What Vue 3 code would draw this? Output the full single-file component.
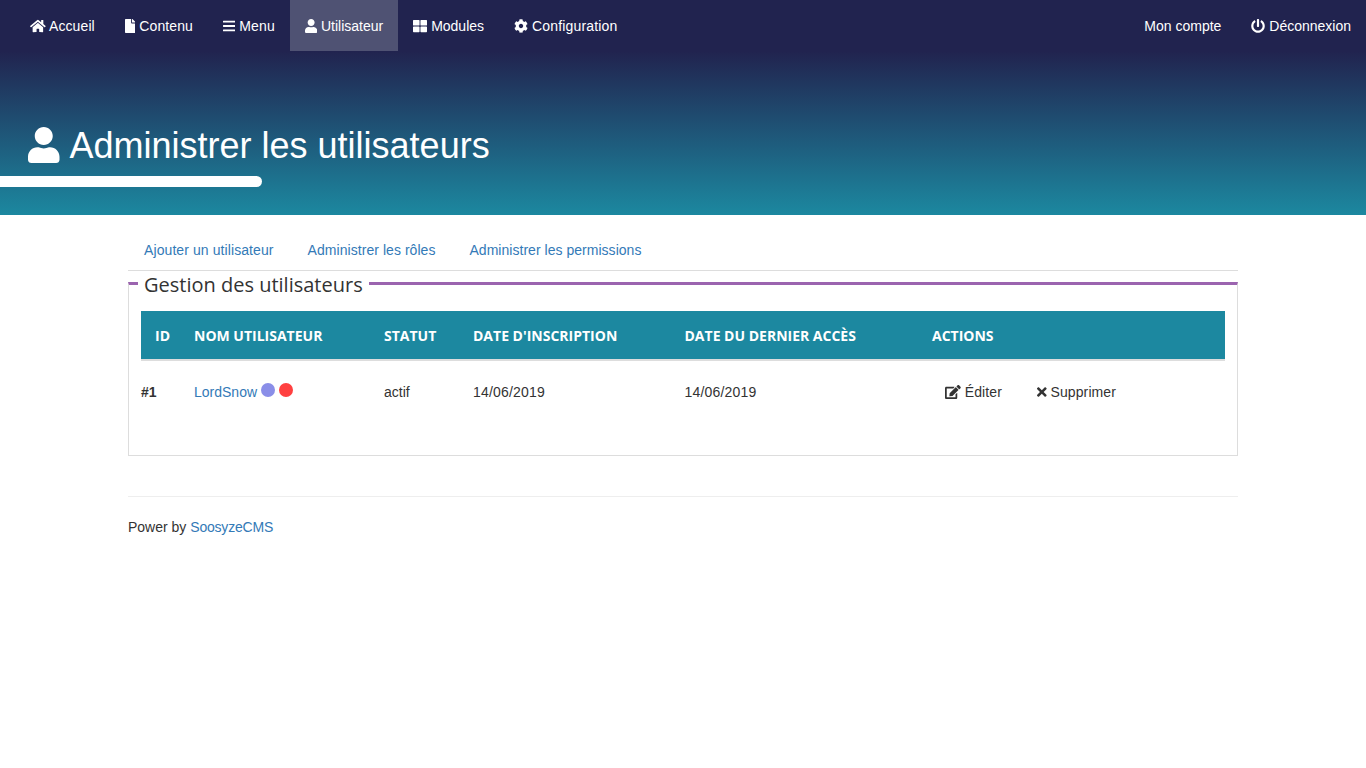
<template>
  <div class="page">
    <header class="top">
      <nav class="nav">
        <ul class="nav-list">
          <li v-for="item in mainMenu" :key="item.label" :class="{ active: item.active }">
            <a href="#" :style="{ letterSpacing: item.ls + 'px' }">
              <svg class="icon" :viewBox="icons[item.icon].box"><path :d="icons[item.icon].d" /></svg>
              {{ item.label }}
            </a>
          </li>
        </ul>
        <ul class="nav-list">
          <li><a href="#">Mon compte</a></li>
          <li>
            <a href="#">
              <svg class="icon" :viewBox="icons.power.box"><path :d="icons.power.d" /></svg>
              Déconnexion
            </a>
          </li>
        </ul>
      </nav>
      <div class="banner">
        <h1>
          <svg class="icon" :viewBox="icons.user.box"><path :d="icons.user.d" /></svg>
          Administrer les utilisateurs
        </h1>
        <div class="bar"></div>
      </div>
    </header>

    <main class="container">
      <ul class="tabs">
        <li v-for="tab in tabs" :key="tab.label">
          <a href="#" :style="{ letterSpacing: tab.ls + 'px' }">{{ tab.label }}</a>
        </li>
      </ul>

      <fieldset class="box">
        <legend>Gestion des utilisateurs</legend>
        <table>
          <colgroup>
            <col v-for="w in colWidths" :key="w" :style="{ width: w + 'px' }" />
          </colgroup>
          <thead>
            <tr>
              <th>Id</th>
              <th>Nom utilisateur</th>
              <th>Statut</th>
              <th>Date d'inscription</th>
              <th>Date du dernier accès</th>
              <th>Actions</th>
            </tr>
          </thead>
          <tbody>
            <tr>
              <td class="num">#1</td>
              <td>
                <a href="#">LordSnow</a>
                <i class="dot blue"></i>
                <i class="dot red"></i>
              </td>
              <td>actif</td>
              <td class="date">14/06/2019</td>
              <td class="date">14/06/2019</td>
              <td class="actions">
                <a href="#" class="act edit">
                  <svg class="icon" :viewBox="icons.edit.box"><path :d="icons.edit.d" /></svg>
                  Éditer
                </a>
                <a href="#" class="act">
                  <svg class="icon" :viewBox="icons.times.box"><path :d="icons.times.d" /></svg>
                  Supprimer
                </a>
              </td>
            </tr>
          </tbody>
        </table>
      </fieldset>

      <footer class="foot">
        <p>Power by <a href="#">SoosyzeCMS</a></p>
      </footer>
    </main>
  </div>
</template>

<script setup>
// ls = small letter spacing, keeps each label as wide as in the design
const mainMenu = [
  { label: "Accueil", icon: "home", ls: 0.1 },
  { label: "Contenu", icon: "file", ls: 0.1 },
  { label: "Menu", icon: "bars", ls: 0.15 },
  { label: "Utilisateur", icon: "user", ls: 0 },
  { label: "Modules", icon: "grid", ls: 0 },
  { label: "Configuration", icon: "cog", ls: 0.15 }
];
mainMenu[3].active = true;

const tabs = [
  { label: "Ajouter un utilisateur", ls: 0.09 },
  { label: "Administrer les rôles", ls: 0.05 },
  { label: "Administrer les permissions", ls: 0.03 }
];

const colWidths = [39, 190, 89, 211.5, 247.5, 307];

const icons = {
  home: {
    box: "0 0 576 512",
    d: "M280.37 148.26L96 300.11V464a16 16 0 0 0 16 16l112.06-.29a16 16 0 0 0 15.92-16V368a16 16 0 0 1 16-16h64a16 16 0 0 1 16 16v95.64a16 16 0 0 0 16 16.05L464 480a16 16 0 0 0 16-16V300L295.67 148.26a12.19 12.19 0 0 0-15.3 0zM571.6 251.47L488 182.56V44.05a12 12 0 0 0-12-12h-56a12 12 0 0 0-12 12v72.61L318.47 43a48 48 0 0 0-61 0L4.34 251.47a12 12 0 0 0-1.6 16.9l25.5 31A12 12 0 0 0 45.15 301l235.22-193.74a12.19 12.19 0 0 1 15.3 0L530.9 301a12 12 0 0 0 16.9-1.6l25.5-31a12 12 0 0 0-1.7-16.93z"
  },
  file: {
    box: "0 0 384 512",
    d: "M224 136V0H24C10.7 0 0 10.7 0 24v464c0 13.3 10.7 24 24 24h336c13.3 0 24-10.7 24-24V160H248c-13.2 0-24-10.8-24-24zm160-14.1v6.1H256V0h6.1c6.4 0 12.5 2.5 17 7l97.9 98c4.5 4.5 7 10.6 7 16.9z"
  },
  bars: {
    box: "0 0 448 512",
    d: "M16 132h416c8.837 0 16-7.163 16-16V76c0-8.837-7.163-16-16-16H16C7.163 60 0 67.163 0 76v40c0 8.837 7.163 16 16 16zm0 160h416c8.837 0 16-7.163 16-16v-40c0-8.837-7.163-16-16-16H16c-8.837 0-16 7.163-16 16v40c0 8.837 7.163 16 16 16zm0 160h416c8.837 0 16-7.163 16-16v-40c0-8.837-7.163-16-16-16H16c-8.837 0-16 7.163-16 16v40c0 8.837 7.163 16 16 16z"
  },
  user: {
    box: "0 0 448 512",
    d: "M224 256c70.7 0 128-57.3 128-128S294.7 0 224 0 96 57.3 96 128s57.3 128 128 128zm89.6 32h-16.7c-22.2 10.2-46.9 16-72.9 16s-50.6-5.8-72.9-16h-16.7C60.2 288 0 348.2 0 422.4V464c0 26.5 21.5 48 48 48h352c26.5 0 48-21.5 48-48v-41.6c0-74.2-60.2-134.4-134.4-134.4z"
  },
  grid: {
    box: "0 0 512 512",
    d: "M296 32h192c13.255 0 24 10.745 24 24v160c0 13.255-10.745 24-24 24H296c-13.255 0-24-10.745-24-24V56c0-13.255 10.745-24 24-24zm-80 0H24C10.745 32 0 42.745 0 56v160c0 13.255 10.745 24 24 24h192c13.255 0 24-10.745 24-24V56c0-13.255-10.745-24-24-24zM0 296v160c0 13.255 10.745 24 24 24h192c13.255 0 24-10.745 24-24V296c0-13.255-10.745-24-24-24H24c-13.255 0-24 10.745-24 24zm296 184h192c13.255 0 24-10.745 24-24V296c0-13.255-10.745-24-24-24H296c-13.255 0-24 10.745-24 24v160c0 13.255 10.745 24 24 24z"
  },
  cog: {
    box: "0 0 512 512",
    d: "M487.4 315.7l-42.6-24.6c4.3-23.2 4.3-47 0-70.2l42.6-24.6c4.9-2.8 7.1-8.6 5.5-14-11.1-35.6-30-67.8-54.7-94.6-3.8-4.1-10-5.1-14.8-2.3L380.8 110c-17.9-15.4-38.5-27.3-60.8-35.1V25.8c0-5.6-3.9-10.5-9.4-11.7-36.7-8.2-74.3-7.8-109.2 0-5.5 1.2-9.4 6.1-9.4 11.7V75c-22.2 7.9-42.8 19.8-60.8 35.1L88.7 85.5c-4.9-2.8-11-1.9-14.8 2.3-24.7 26.7-43.6 58.9-54.7 94.6-1.7 5.4.6 11.2 5.5 14L67.3 221c-4.3 23.2-4.3 47 0 70.2l-42.6 24.6c-4.9 2.8-7.1 8.6-5.5 14 11.1 35.6 30 67.8 54.7 94.6 3.8 4.1 10 5.1 14.8 2.3l42.6-24.6c17.9 15.4 38.5 27.3 60.8 35.1v49.2c0 5.6 3.9 10.5 9.4 11.7 36.7 8.2 74.3 7.8 109.2 0 5.5-1.2 9.4-6.1 9.4-11.7v-49.2c22.2-7.9 42.8-19.8 60.8-35.1l42.6 24.6c4.9 2.8 11 1.9 14.8-2.3 24.7-26.7 43.6-58.9 54.7-94.6 1.5-5.5-.7-11.3-5.6-14.1zM256 336c-44.1 0-80-35.9-80-80s35.9-80 80-80 80 35.9 80 80-35.9 80-80 80z"
  },
  power: {
    box: "0 0 512 512",
    d: "M400 54.1c63 45 104 118.6 104 201.9 0 136.8-110.8 247.7-247.5 248C120 504.3 8.2 393 8 256.4 7.9 173.1 48.9 99.3 111.8 54.2c11.7-8.3 28-4.8 35 7.7L162.6 90c5.9 10.5 3.1 23.8-6.6 31-41.5 30.8-68 79.6-68 134.9-.1 92.3 74.5 168.1 168 168.1 91.6 0 168.6-74.2 168-169.1-.3-51.8-24.7-101.8-68.1-134-9.7-7.2-12.4-20.5-6.5-30.9l15.8-28.1c7-12.4 23.2-16.1 34.8-7.8zM296 264V24c0-13.3-10.7-24-24-24h-32c-13.3 0-24 10.7-24 24v240c0 13.3 10.7 24 24 24h32c13.3 0 24-10.7 24-24z"
  },
  edit: {
    box: "0 0 576 512",
    d: "M402.6 83.2l90.2 90.2c3.8 3.8 3.8 10 0 13.8L274.4 405.6l-92.8 10.3c-12.4 1.4-22.9-9.1-21.5-21.5l10.3-92.8L388.8 83.2c3.8-3.8 10-3.8 13.8 0zm162-22.9l-48.8-48.8c-15.2-15.2-39.9-15.2-55.2 0l-35.4 35.4c-3.8 3.8-3.8 10 0 13.8l90.2 90.2c3.8 3.8 10 3.8 13.8 0l35.4-35.4c15.2-15.3 15.2-40 0-55.2zM384 346.2V448H64V128h229.8c3.2 0 6.2-1.3 8.5-3.5l40-40c7.6-7.6 2.2-20.5-8.5-20.5H48C21.5 64 0 85.5 0 112v352c0 26.5 21.5 48 48 48h352c26.5 0 48-21.5 48-48V306.2c0-10.7-12.9-16-20.5-8.5l-40 40c-2.2 2.3-3.5 5.3-3.5 8.5z"
  },
  times: {
    box: "0 0 352 512",
    d: "M242.72 256l100.07-100.07c12.28-12.28 12.28-32.19 0-44.48l-22.24-22.24c-12.28-12.28-32.19-12.28-44.48 0L176 189.28 75.93 89.21c-12.28-12.28-32.19-12.28-44.48 0L9.21 111.45c-12.28 12.28-12.28 32.19 0 44.48L109.28 256 9.21 356.07c-12.28 12.28-12.28 32.19 0 44.48l22.24 22.24c12.28 12.28 32.2 12.28 44.48 0L176 322.72l100.07 100.07c12.28 12.28 32.2 12.28 44.48 0l22.24-22.24c12.28-12.28 12.28-32.19 0-44.48L242.72 256z"
  }
};
</script>

<style scoped>
.page {
  font-family: "Liberation Sans", Arial, sans-serif;
  font-size: 14px;
  line-height: 20px;
  color: #333;
}
a {
  color: #337ab7;
  text-decoration: none;
}
.icon {
  display: inline-block;
  height: 1em;
  width: auto;
  vertical-align: -0.125em;
  fill: currentColor;
}

/* header */
.top {
  height: 215px;
  background: linear-gradient(#21234f 51px, #1c88a0 100%);
  color: #fff;
}
.nav {
  display: flex;
  justify-content: space-between;
  padding-left: 15px;
  height: 51px;
  background: #21234f;
}
.nav-list {
  display: flex;
  margin: 0;
  padding: 0;
  list-style: none;
}
.nav-list a {
  display: block;
  padding: 16px 15px 15px;
  color: #fff;
}
.nav-list .active a {
  background: #4f5273;
}
.banner {
  padding-top: 75px;
}
h1 {
  margin: 0;
  padding-left: 28px;
  font-size: 36px;
  font-weight: 400;
  line-height: 40px;
}
h1 .icon {
  margin-right: 2px;
}
.bar {
  width: 262px;
  height: 11px;
  margin-top: 10px;
  background: #fff;
  border-radius: 0 6px 6px 0;
}

/* content */
.container {
  width: 1110px;
  margin: 0 auto;
  padding-top: 14px;
}
.tabs {
  display: flex;
  margin: 0;
  padding: 0;
  list-style: none;
  border-bottom: 1px solid #ddd;
}
.tabs a {
  display: block;
  margin-right: 2px;
  padding: 10px 15px 9px;
  border: 1px solid transparent;
}
.box {
  margin: 0;
  padding: 0 12px 32px;
  min-width: 0;
  border: 1px solid #ddd;
  border-top: 3px solid #9b64af;
}
legend {
  margin-left: -3px;
  padding: 2px 6px 0;
  font-family: "Open Sans", sans-serif;
  font-size: 20px;
  line-height: 23px;
  color: #333;
}
table {
  width: 1084px;
  margin-top: 15px;
  border-collapse: collapse;
  table-layout: fixed;
}
th {
  height: 49px;
  padding: 1px 14px 0;
  box-sizing: border-box;
  border-bottom: 2px solid #ddd;
  background: #1c88a0;
  color: #fff;
  font-family: "Open Sans", sans-serif;
  font-size: 14px;
  font-weight: 700;
  text-align: left;
  text-transform: uppercase;
  white-space: nowrap;
}
td {
  height: 62px;
  padding: 0 14px;
  white-space: nowrap;
}
.num {
  padding-left: 0;
  font-weight: 700;
}
.date {
  letter-spacing: 0.2px;
}
.dot {
  display: inline-block;
  width: 14px;
  height: 14px;
  margin-left: 4px;
  border-radius: 50%;
}
.blue {
  background: #8a8ee8;
}
.red {
  background: #ff4040;
}
.actions {
  padding-left: 27px;
}
.act {
  color: #333;
  letter-spacing: 0.1px;
}
.edit {
  margin-right: 31px;
}

/* footer */
.foot {
  margin-top: 40px;
  padding-top: 20px;
  border-top: 1px solid #eee;
}
.foot p {
  margin: 0;
}
.foot a {
  letter-spacing: -0.2px;
}
</style>

<style>
body {
  background: #fff;
}
</style>
